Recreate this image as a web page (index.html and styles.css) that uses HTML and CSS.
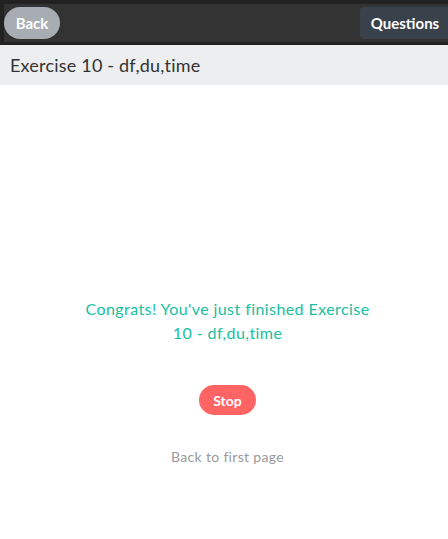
FILE: index.html
```html
<!DOCTYPE html>
<html>
<head>
<meta charset="utf-8">
<link rel="stylesheet" href="styles.css">
</head>
<body>
<div class="topbar">
  <button class="btn-back">Back</button>
  <button class="btn-questions">Questions</button>
</div>
<div class="title-bar">Exercise 10 - df,du,time</div>
<main class="content">
  <p class="congrats">Congrats! You've just finished Exercise 10 - df,du,time</p>
  <button class="btn-stop">Stop</button>
  <a class="back-link">Back to first page</a>
</main>
</body>
</html>
```
FILE: styles.css
```css
html, body {
  margin: 0;
  padding: 0;
  background: #fff;
  font-family: Lato, "Open Sans", sans-serif;
}
.topbar {
  height: 38px;
  background: #333333;
  border: 4px solid #222222;
  border-top-width: 4px;
  border-bottom-width: 3px;
  border-right: none;
  display: flex;
  align-items: center;
  justify-content: space-between;
}
.btn-back {
  margin-left: 0;
  height: 32px;
  width: 56px;
  border: none;
  border-radius: 16px;
  background: #a7adb3;
  color: #fff;
  font-family: inherit;
  font-size: 15px;
  font-weight: 700;
  padding: 0;
}
.btn-questions {
  height: 32px;
  width: 88px;
  border: none;
  border-radius: 4px 0 0 4px;
  background: #39414b;
  color: #fff;
  font-family: inherit;
  font-size: 15px;
  font-weight: 700;
  padding: 0 0 0 2px;
}
.title-bar {
  height: 40px;
  background: #eceef0;
  color: #333;
  font-size: 18px;
  letter-spacing: 0.2px;
  line-height: 40px;
  padding-left: 10px;
}
.content {
  display: flex;
  flex-direction: column;
  align-items: center;
  padding: 212px 0 0 7px;
}
.congrats {
  margin: 0;
  width: 300px;
  text-align: center;
  color: #17c09f;
  font-size: 16px;
  letter-spacing: 0.42px;
  line-height: 24px;
}
.btn-stop {
  margin-top: 40px;
  height: 30px;
  width: 57px;
  border: none;
  border-radius: 15px;
  background: #ff6464;
  color: #fff;
  font-family: inherit;
  font-size: 14px;
  font-weight: 700;
  padding: 0;
}
.back-link {
  margin-top: 32px;
  color: #9a9a9a;
  font-size: 14px;
  letter-spacing: 0.33px;
  line-height: 20px;
}
```
